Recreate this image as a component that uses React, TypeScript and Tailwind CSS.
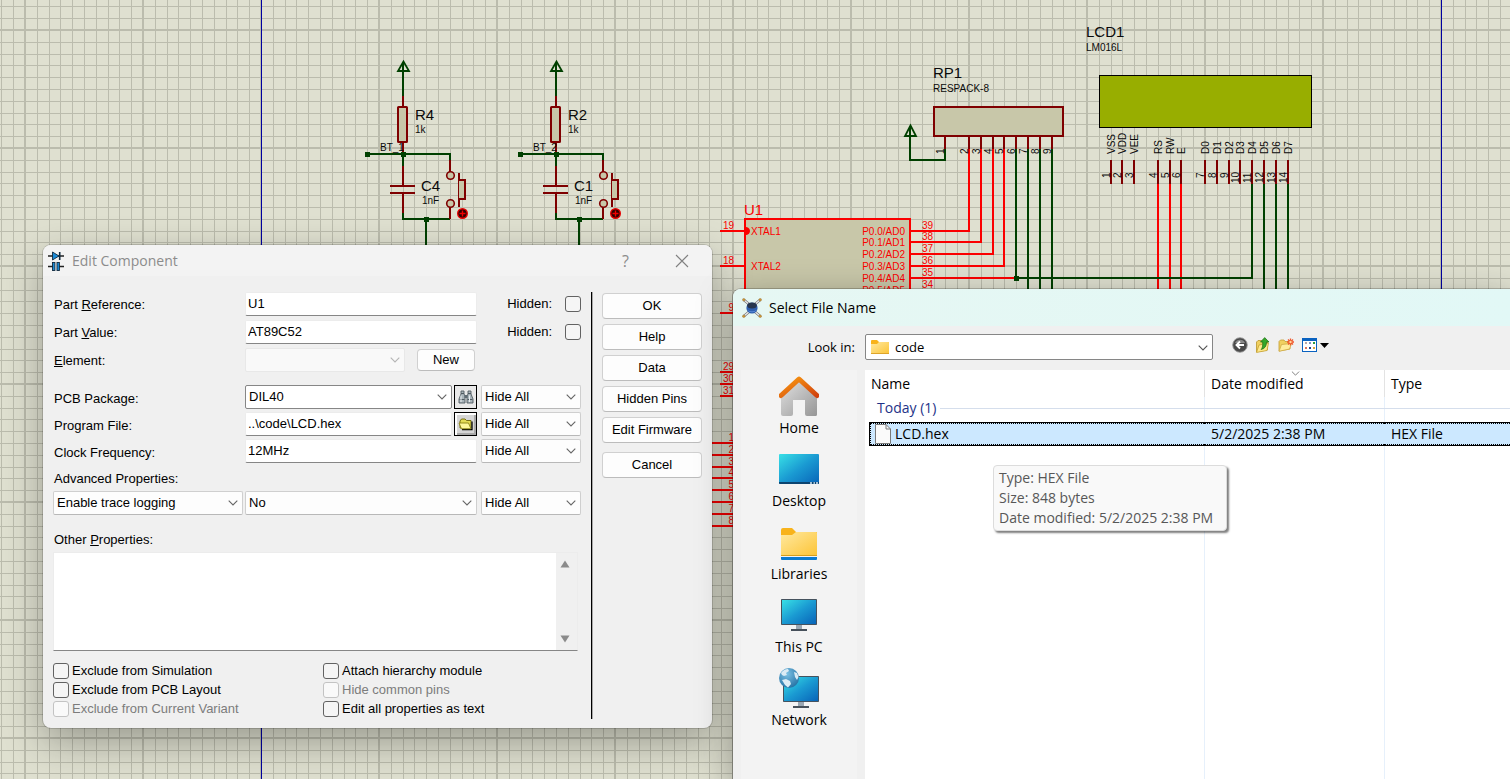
import type { ReactNode } from "react";

const UI = "font-['Open_Sans','Noto_Sans',sans-serif]";

/* ---------- schematic ---------- */

const GREEN = "#004000";
const MAROON = "#7f0000";
const RED = "#fb0000";
const BODY = "#c8c7a9";
const MINOR = [13, 25, 36, 48, 60, 72, 84, 95, 107];

function Lines({ d, color }: { d: string; color: string }) {
  return <path d={d} stroke={color} strokeWidth="2" fill="none" shapeRendering="crispEdges" />;
}

function Label({ x, y, size = 10, color = "#0a0a0a", end, vertical, children }: {
  x: number; y: number; size?: number; color?: string; end?: boolean; vertical?: boolean; children: ReactNode;
}) {
  return (
    <text x={x} y={y} fontSize={size} fill={color} textAnchor={end ? "end" : "start"}
      transform={vertical ? `rotate(-90 ${x} ${y})` : undefined}>
      {children}
    </text>
  );
}

function Node({ x, y }: { x: number; y: number }) {
  return <rect x={x - 2} y={y - 2} width="5" height="5" fill={GREEN} shapeRendering="crispEdges" />;
}

function ButtonCircuit({ dx, r, c, net }: { dx: number; r: string; c: string; net: string }) {
  return (
    <g transform={`translate(${dx} 0)`}>
      <path d="M403.5 61.5 L398 71 H409 Z" stroke={GREEN} strokeWidth="1.8" fill="none" />
      <Lines color={GREEN} d="M403 62V96" />
      <Lines color={MAROON} d="M403 96V107M403 142V152" />
      <rect x="398" y="107" width="9" height="35" rx="0.5" fill={BODY} stroke={MAROON} strokeWidth="2" />
      <Lines color={GREEN} d="M367 154H451M403 154V166M450 154V160M402 219H450M403 213V219M426 219V250" />
      <Lines color={MAROON} d="M403 166V186M390 186H415M390 193H415M403 193V213M450 160V172M450 207V219M459 173V207" />
      <path d="M459 180H465V199H459" stroke={MAROON} strokeWidth="2" fill={BODY} />
      <circle cx="450.5" cy="175.5" r="3.8" fill={BODY} stroke={MAROON} strokeWidth="1.6" />
      <circle cx="450.5" cy="203.5" r="3.8" fill={BODY} stroke={MAROON} strokeWidth="1.6" />
      <circle cx="462.5" cy="213.5" r="4.8" fill="#300000" stroke="#e80000" strokeWidth="1.4" />
      <path d="M459.5 213.5H465.5M462.5 210.5V216.5" stroke="#f00000" strokeWidth="1.4" />
      <Node x={367} y={154} />
      <Node x={403} y={154} />
      <Node x={426} y={219} />
      <Label x={415} y={120} size={15}>{r}</Label>
      <Label x={415} y={133}>1k</Label>
      <Label x={380} y={151}>{net}</Label>
      <Label x={421} y={191} size={15}>{c}</Label>
      <Label x={422} y={204}>1nF</Label>
    </g>
  );
}

const PACK = [945, 969, 981, 993, 1004, 1016, 1028, 1040, 1052];
const PACK_END = [160, 231, 242, 254, 266, 278, 300, 300, 300];
const PORT_Y = [231, 242, 254, 266, 278, 290];
const LCD: [number, string][] = [
  [1111, "VSS"], [1122, "VDD"], [1134, "VEE"], [1158, "RS"], [1170, "RW"], [1181, "E"], [1205, "D0"],
  [1217, "D1"], [1229, "D2"], [1240, "D3"], [1252, "D4"], [1264, "D5"], [1276, "D6"], [1288, "D7"],
];
const LEFT_PINS: [number, number][] = [[19, 231], [18, 266], [9, 313], [29, 372], [30, 384], [31, 396]];
const PORT1 = [443, 455, 467, 478, 490, 502, 514, 526];

function Schematic() {
  return (
    <svg className="absolute inset-0 size-full font-['Liberation_Sans',Arial,sans-serif]" aria-label="Schematic sheet">
      <defs>
        <pattern id="grid" x="24" y="29" width="118" height="118" patternUnits="userSpaceOnUse">
          <rect width="118" height="118" fill="#dfe0d0" />
          <g fill="#bbbcad" shapeRendering="crispEdges">
            <rect width="2" height="118" />
            <rect width="118" height="2" />
            {MINOR.map((m) => <rect key={m} x={m} width="1" height="118" />)}
            {MINOR.map((m) => <rect key={-m} y={m} width="118" height="1" />)}
          </g>
        </pattern>
      </defs>
      <rect width="100%" height="100%" fill="url(#grid)" />
      <rect x="261" width="1" height="100%" fill="#0000a0" />
      <rect x="1441" width="1" height="100%" fill="#0000a0" />

      <ButtonCircuit dx={0} r="R4" c="C4" net="BT_1" />
      <ButtonCircuit dx={153} r="R2" c="C1" net="BT_2" />

      <Label x={933} y={78} size={15}>RP1</Label>
      <Label x={933} y={92}>RESPACK-8</Label>
      <rect x="934" y="107" width="129" height="29" fill={BODY} stroke={MAROON} strokeWidth="2" />
      <path d="M910.5 125.5 L905 136 H916 Z" stroke={GREEN} strokeWidth="1.8" fill="none" />
      <Lines color={GREEN} d="M910 126V160H946" />
      {PACK.map((x, i) => (
        <g key={x}>
          <Lines color={MAROON} d={`M${x} 137V149`} />
          <Lines color={i > 0 && i < 5 ? RED : GREEN} d={`M${x} 149V${PACK_END[i]}`} />
          <Label x={x - 1} y={154} vertical>{i + 1}</Label>
        </g>
      ))}

      <rect x="745" y="219" width="165" height="400" fill={BODY} stroke={RED} strokeWidth="2" />
      <Label x={744} y={215} size={15} color={RED}>U1</Label>
      <path d="M746 227.5 A3.5 3.5 0 0 1 746 234.5 Z" fill={RED} stroke={RED} />
      <Label x={751} y={235} color={RED}>XTAL1</Label>
      <Label x={751} y={270} color={RED}>XTAL2</Label>
      {PORT_Y.map((y, i) => (
        <g key={y}>
          <Lines color={RED} d={`M911 ${y}H${i < 5 ? PACK[i + 1] + 1 : 930}`} />
          <Label x={922} y={y - 2} color={RED}>{39 - i}</Label>
          <Label x={905} y={y + 4} color={RED} end>P0.{i}/AD{i}</Label>
        </g>
      ))}
      {LEFT_PINS.map(([n, y]) => (
        <g key={n}>
          <Lines color={RED} d={`M720 ${y}H745`} />
          <Label x={734} y={y - 2} color={RED} end>{n}</Label>
        </g>
      ))}
      {PORT1.map((y, i) => (
        <g key={y}>
          <Lines color={RED} d={`M700 ${y}H745`} />
          <Label x={734} y={y - 2} color={RED} end>{i + 1}</Label>
        </g>
      ))}

      <Label x={1086} y={37} size={15}>LCD1</Label>
      <Label x={1086} y={51}>LM016L</Label>
      <rect x="1099.5" y="75.5" width="212" height="52" fill="#98ae00" stroke="#000" />
      {LCD.map(([x, name], i) => (
        <g key={name}>
          <Lines color={MAROON} d={`M${x} 160V184`} />
          {i > 2 && i < 6 && <Lines color={RED} d={`M${x} 184V300`} />}
          {i > 9 && <Lines color={GREEN} d={`M${x} 184V${i === 10 ? 279 : 300}`} />}
          <Label x={x + 4} y={154} vertical>{name}</Label>
          <Label x={x - 1} y={i < 9 ? 178 : 183} vertical>{i + 1}</Label>
        </g>
      ))}
      <Lines color={GREEN} d="M1016 278H1252" />
      <Node x={1016} y={278} />
    </svg>
  );
}

/* ---------- form pieces ---------- */

function Chevron({ className }: { className: string }) {
  return (
    <svg viewBox="0 0 10 6" className={className} fill="none" stroke="currentColor" strokeWidth="1.1">
      <path d="M0.7 0.7 L5 5 L9.3 0.7" />
    </svg>
  );
}

function Drop({ value, label, id, width, strong, disabled }: {
  value: string; label?: string; id?: string; width: string; strong?: boolean; disabled?: boolean;
}) {
  return (
    <span className={`relative flex h-6 ${width}`}>
      <select id={id} aria-label={label} disabled={disabled}
        className={`size-full appearance-none rounded-xs border pl-[3px] pr-6 leading-5 ${
          strong ? "border-[#868686] bg-white" : disabled ? "border-[#e8e8e8] bg-[#f9f9f9]" : "border-[#cfcfcf] border-b-[#b8b8b8] bg-[#fdfdfd]"}`}>
        <option>{value}</option>
      </select>
      <Chevron className={`pointer-events-none absolute right-[5px] top-[9px] h-1.5 w-2.5 ${disabled ? "text-[#b5b5b5]" : "text-[#666]"}`} />
    </span>
  );
}

function Field({ id, value, width }: { id: string; value: string; width: string }) {
  return (
    <input id={id} defaultValue={value}
      className={`h-6 rounded-xs border border-[#ececec] border-b-[#868686] bg-white px-0.5 pb-0.5 outline-none ${width}`} />
  );
}

function Check({ id, disabled, children }: { id: string; disabled?: boolean; children: ReactNode }) {
  return (
    <div className="flex h-[19px] items-center gap-[3px]">
      <input type="checkbox" id={id} disabled={disabled}
        className="size-4 shrink-0 appearance-none rounded-[3px] border border-[#626262] bg-[#f5f5f5] disabled:border-[#c3c3c3] disabled:bg-[#f9f9f9]" />
      <label htmlFor={id} className={disabled ? "text-[#7c7c7c]" : ""}>{children}</label>
    </div>
  );
}

function HiddenCheck({ id }: { id: string }) {
  return (
    <div className="ml-auto flex items-center gap-[13px]">
      <label htmlFor={id}>Hidden:</label>
      <input type="checkbox" id={id} className="size-4 appearance-none rounded-[3px] border border-[#626262] bg-[#f5f5f5]" />
    </div>
  );
}

function Push({ children, className = "" }: { children: ReactNode; className?: string }) {
  return (
    <button className={`rounded border border-[#d0d0d0] border-b-[#bcbcbc] bg-[#fdfdfd] ${className}`}>{children}</button>
  );
}

function Binoculars() {
  return (
    <svg viewBox="0 0 16 16" className="size-4">
      <path d="M3 2H6V5L7 7V14H1V10L3 5Z" fill="#a9b4ba" stroke="#4f5a61" strokeWidth="0.9" />
      <path d="M10 2H13V5L15 10V14H9V7L10 5Z" fill="#a9b4ba" stroke="#4f5a61" strokeWidth="0.9" />
      <path d="M6.5 6H9.5V9H6.5Z" fill="#5f6b73" />
      <path d="M3 4.5H6M10 4.5H13M1.5 10.5H6.5M9.5 10.5H14.5" stroke="#4f5a61" />
      <path d="M3 6.5V13M11.5 6.5V13" stroke="#e8edf0" />
    </svg>
  );
}

function OpenFolder() {
  return (
    <svg viewBox="0 0 16 16" className="size-4">
      <path d="M2 12V5L3.5 3H7L8.500 4.500H13V12Z" fill="#e3dc55" stroke="#6b6408" strokeWidth="0.9" />
      <path d="M14 5.500V13.500H4" stroke="#000" strokeWidth="1.3" fill="none" />
      <path d="M1 7H10.500L13 12.800H3.500Z" fill="#fdf89a" stroke="#8a8213" strokeWidth="0.9" />
    </svg>
  );
}

function ComponentIcon() {
  return (
    <svg viewBox="0 0 16 20" className="h-5 w-4">
      <path d="M0 5H16M0 15.5H5M11 15.5H16" stroke="#222" strokeWidth="1.4" />
      <path d="M4.5 1V9L11 5Z" fill="#1a8ad6" stroke="#10293d" strokeWidth="0.9" />
      <path d="M11.7 1V9" stroke="#10293d" strokeWidth="1.6" />
      <rect x="4.5" y="11.5" width="2.4" height="8" fill="#1a8ad6" stroke="#10293d" strokeWidth="0.9" />
      <rect x="9" y="11.5" width="2.4" height="8" fill="#1a8ad6" stroke="#10293d" strokeWidth="0.9" />
    </svg>
  );
}

const labelCell = "w-48 shrink-0 pl-px";

function EditComponent() {
  return (
    <section aria-label="Edit Component"
      className="absolute left-[43px] top-[245px] w-[669px] overflow-hidden rounded-lg bg-[#f0f0f0] font-['Liberation_Sans',Arial,sans-serif] text-[13px] leading-4 text-black shadow-[0_0_0_1px_rgba(0,0,0,0.15),0_14px_40px_rgba(0,0,0,0.32)]">
      <header className={`flex h-[31px] items-center bg-[#f3f3f3] pl-[5px] pr-[23px] text-[#8c8c8c] ${UI}`}>
        <ComponentIcon />
        <h1 className="ml-2 text-[14px]">Edit Component</h1>
        <button aria-label="Help" className="ml-auto mr-[46px] text-[16px]">?</button>
        <button aria-label="Close">
          <svg viewBox="0 0 14 14" className="size-3.5" stroke="#808080" strokeWidth="1.1"><path d="M1 1L13 13M13 1L1 13" /></svg>
        </button>
      </header>

      <div className="flex pl-2.5 pr-2.5">
        <form className="flex w-[528px] flex-col pb-[10px] pt-4">
          <div className="flex h-6 items-center">
            <label htmlFor="ref" className={`${labelCell} pt-px`}>Part <u>R</u>eference:</label>
            <Field id="ref" value="U1" width="w-[232px]" />
            <HiddenCheck id="hide-ref" />
          </div>
          <div className="mt-1 flex h-6 items-center">
            <label htmlFor="val" className={`${labelCell} pt-px`}>Part <u>V</u>alue:</label>
            <Field id="val" value="AT89C52" width="w-[232px]" />
            <HiddenCheck id="hide-val" />
          </div>
          <div className="mt-1 flex h-6 items-center">
            <label htmlFor="element" className={`${labelCell} pt-px`}><u>E</u>lement:</label>
            <Drop id="element" value="" width="w-40" disabled />
            <Push className="ml-3 h-[22px] w-[58px]">New</Push>
          </div>

          <div className="mt-[13px] flex h-6 items-center">
            <label htmlFor="pcb" className={`${labelCell} pt-1`}>PCB Package:</label>
            <Drop id="pcb" value="DIL40" width="w-[207px]" strong />
            <button type="button" aria-label="Find package" className="ml-0.5 mr-1 flex h-6 w-[23px] items-center justify-center border border-black bg-[#e9e9e9]"><Binoculars /></button>
            <Drop label="PCB Package visibility" value="Hide All" width="w-[100px]" />
          </div>
          <div className="mt-[3px] flex h-6 items-center">
            <label htmlFor="prog" className={`${labelCell} pt-1`}>Program File:</label>
            <Field id="prog" value="..\code\LCD.hex" width="w-[207px]" />
            <button type="button" aria-label="Browse" className="ml-0.5 mr-1 flex h-6 w-[23px] items-center justify-center border border-black bg-[#d6d6d6] shadow-[inset_2px_2px_0_#fff,inset_-2px_-2px_0_#a9a9a9]"><OpenFolder /></button>
            <Drop label="Program File visibility" value="Hide All" width="w-[100px]" />
          </div>
          <div className="mt-[3px] flex h-6 items-center">
            <label htmlFor="clock" className={`${labelCell} pt-1`}>Clock Frequency:</label>
            <Field id="clock" value="12MHz" width="w-[232px]" />
            <span className="w-1" />
            <Drop label="Clock Frequency visibility" value="Hide All" width="w-[100px]" />
          </div>

          <label htmlFor="adv" className="h-7 pl-px pt-2">Advanced Properties:</label>
          <div className="flex h-6">
            <Drop id="adv" value="Enable trace logging" width="w-[190px]" />
            <span className="w-0.5" />
            <Drop label="Advanced value" value="No" width="w-[232px]" />
            <span className="w-1" />
            <Drop label="Advanced visibility" value="Hide All" width="w-[100px]" />
          </div>

          <label htmlFor="other" className="mt-[17px] h-5 pl-px">Other <u>P</u>roperties:</label>
          <div className="flex h-[99px] w-[525px] border border-[#ececec] border-b-[#868686] bg-white">
            <textarea id="other" className="flex-1 resize-none outline-none" />
            <div className="flex w-[21px] flex-col items-center justify-between bg-[#f0f0f0] py-[7px] pr-1">
              <svg viewBox="0 0 10 8" className="h-2 w-2.5"><path d="M5 0.5L9.5 7.5H0.5Z" fill="#8b8b8b" /></svg>
              <svg viewBox="0 0 10 8" className="h-2 w-2.5"><path d="M5 7.5L9.5 0.5H0.5Z" fill="#8b8b8b" /></svg>
            </div>
          </div>

          <div className="mt-2.5 grid grid-cols-[270px_1fr]">
            <Check id="ex-sim">Exclude from Simulation</Check>
            <Check id="attach">Attach hierarchy module</Check>
            <Check id="ex-pcb">Exclude from PCB Layout</Check>
            <Check id="common" disabled>Hide common pins</Check>
            <Check id="ex-var" disabled>Exclude from Current Variant</Check>
            <Check id="as-text">Edit all properties as text</Check>
          </div>
        </form>

        <div className="mb-[9px] ml-2.5 mt-4 w-0.5 border-l border-black bg-[#a8a8a8]" />

        <div className="ml-[9px] flex flex-1 flex-col gap-[5px] pt-[17px]">
          <Push className="h-[26px]">OK</Push>
          <Push className="h-[26px]">Help</Push>
          <Push className="h-[26px]">Data</Push>
          <Push className="h-[26px]">Hidden Pins</Push>
          <Push className="h-[26px]">Edit Firmware</Push>
          <Push className="mt-1 h-[26px]">Cancel</Push>
        </div>
      </div>
    </section>
  );
}

/* ---------- file picker ---------- */

function AppIcon() {
  return (
    <svg viewBox="0 0 20 20" className="size-5">
      <path d="M2 2L8 7M18 2L12 7M2 18L8 13M18 18L12 13" stroke="#777" strokeWidth="2.6" />
      <path d="M2 2L8 7M18 2L12 7M2 18L8 13M18 18L12 13" stroke="#eee" strokeWidth="1.1" />
      <g fill="#d49a35" stroke="#80602a" strokeWidth="0.4">
        <circle cx="1.8" cy="1.8" r="1.3" /><circle cx="18.2" cy="1.8" r="1.3" />
        <circle cx="1.8" cy="18.2" r="1.3" /><circle cx="18.2" cy="18.2" r="1.3" />
      </g>
      <circle cx="10" cy="10" r="5.6" fill="#2f5fae" />
      <ellipse cx="10" cy="7.5" rx="4.8" ry="3" fill="#27354d" />
      <path d="M5.5 12 A5 4 0 0 0 14.5 12 Q10 15 5.5 12Z" fill="#6b9ae8" />
    </svg>
  );
}

function Screen({ x, y, w, h }: { x: number; y: number; w: number; h: number }) {
  const mid = x + w / 2;
  return (
    <g>
      <rect x={mid - 3} y={y + h} width="6" height="4" fill="#9aa7b3" />
      <rect x={mid - 8} y={y + h + 4} width="16" height="2" fill="#46505a" />
      <rect x={x} y={y} width={w} height={h} rx="0.8" fill="#45525e" />
      <rect x={x + 1} y={y + 1} width={w - 2} height={h - 2} fill="url(#screen)" />
    </g>
  );
}

const PLACES: { name: string; art: ReactNode }[] = [
  {
    name: "Home",
    art: (
      <>
        <path d="M2 20L20 4L38 20V38.500Q38 40 36.500 40H28Q26 40 26 38V24H14V38Q14 40 12 40H4Q2 40 2 38Z" fill="url(#wall)" />
        <path d="M2 19.500L20 3L38 19.500" stroke="url(#roof)" strokeWidth="5" fill="none" strokeLinejoin="round" strokeLinecap="round" />
      </>
    ),
  },
  {
    name: "Desktop",
    art: (
      <>
        <rect y="5" width="40" height="30" rx="1" fill="url(#screen)" />
        <path d="M0 33H40V34Q40 35 39 35H1Q0 35 0 34Z" fill="#0c4470" />
        <path d="M31 34H33M34.500 34H36M37 34H39" stroke="#d5e8f5" strokeWidth="1.3" />
      </>
    ),
  },
  {
    name: "Libraries",
    art: (
      <>
        <path d="M2 8Q2 6 4 6H13L17 10H38V20H2Z" fill="#f8b31b" />
        <path d="M2 13H13L17 10H37Q38 10 38 11V34H2Z" fill="url(#folder)" />
        <rect x="2" y="33" width="36" height="1" fill="#d59e1c" />
        <path d="M2 35H38V37Q38 38 37 38H3Q2 38 2 37Z" fill="#0b7bd0" />
      </>
    ),
  },
  { name: "This PC", art: <Screen x={2} y={4} w={36} h={26} /> },
  {
    name: "Network",
    art: (
      <>
        <Screen x={4} y={8} w={36} h={26} />
        <circle cx="10" cy="10" r="10" fill="url(#globe)" />
        <path d="M2 5Q5 1 9 1L10 3L7 5L8 7L5 8L3 7ZM15 4L18 5L19.500 9L18 12L16 9ZM3 12L7 11L11 13L12 16L9 19.500L6 17Z" fill="#dcecf5" />
      </>
    ),
  },
];

function ArtDefs() {
  return (
    <svg className="absolute size-0" aria-hidden="true">
      <defs>
        <linearGradient id="screen" x1="0" y1="0" x2="1" y2="1"><stop offset="0" stopColor="#38e0e6" /><stop offset="0.5" stopColor="#1a9ad2" /><stop offset="1" stopColor="#0864b8" /></linearGradient>
        <linearGradient id="wall" x1="0" y1="0" x2="1" y2="1"><stop offset="0" stopColor="#e2e2e2" /><stop offset="1" stopColor="#969696" /></linearGradient>
        <linearGradient id="roof" x1="0" y1="0" x2="1" y2="1"><stop offset="0" stopColor="#f99b12" /><stop offset="1" stopColor="#d2420d" /></linearGradient>
        <linearGradient id="folder" x1="0" y1="0" x2="1" y2="1"><stop offset="0" stopColor="#ffe9a0" /><stop offset="1" stopColor="#fcc436" /></linearGradient>
        <radialGradient id="globe" cx="0.4" cy="0.3" r="0.8"><stop offset="0" stopColor="#7cc1e4" /><stop offset="1" stopColor="#1d6a9e" /></radialGradient>
      </defs>
    </svg>
  );
}

function FolderGlyph() {
  return (
    <svg viewBox="0 0 18 14" className="h-3.5 w-[18px]">
      <path d="M0 1Q0 0 1 0H6L8 2H17Q18 2 18 3V8H0Z" fill="#f8b31b" />
      <path d="M0 4H6L8 2H17Q18 2 18 3V13Q18 14 17 14H1Q0 14 0 13Z" fill="url(#folder)" />
      <rect y="13" width="18" height="1" fill="#dea52a" />
    </svg>
  );
}

function ToolIcons() {
  return (
    <div className="ml-[19px] flex items-center pb-1">
      <button aria-label="Back">
        <svg viewBox="0 0 16 16" className="size-4">
          <circle cx="8" cy="8" r="7.3" fill="#4a4a4a" stroke="#9b9b9b" strokeWidth="0.9" />
          <path d="M3 6A5.5 5.5 0 0 1 13 6Z" fill="#8a8a8a" />
          <path d="M12 8H5M8 4.5L4.5 8L8 11.5" stroke="#fff" strokeWidth="1.9" fill="none" />
        </svg>
      </button>
      <button aria-label="Up one level" className="ml-[7px]">
        <svg viewBox="0 0 16 16" className="size-4">
          <path d="M1.5 15V5L3 3.5H6.500L7.500 5H12.500V13Z" fill="#f0d060" stroke="#b8942c" strokeWidth="0.8" />
          <path d="M1.5 15.400L4 8L13.500 6L12 13.500Z" fill="#ffe98c" stroke="#c7a234" strokeWidth="0.8" />
          <path d="M6 12.500Q8 11 7.700 5H5.500L9.700 0.600L14 5H11.500Q11.500 11.500 6 12.500Z" fill="#35a829" stroke="#1c6e14" strokeWidth="0.7" />
        </svg>
      </button>
      <button aria-label="New folder" className="ml-[7px]">
        <svg viewBox="0 0 16 16" className="size-4">
          <path d="M1 14V4.500L2.500 3H6L7 4.500H12V12Z" fill="#f0d060" stroke="#c39d34" strokeWidth="0.8" />
          <path d="M1 14.300L3.500 7.500L13.500 6.500L11.500 12Z" fill="#ffec9c" stroke="#cfab45" strokeWidth="0.8" />
          <path d="M12.500 1.500V8.500M9 5H16M10 2.500L15 7.500M15 2.500L10 7.500" stroke="#f0562a" strokeWidth="1.3" />
          <circle cx="12.500" cy="5" r="1.200" fill="#ffd9a0" />
        </svg>
      </button>
      <button aria-label="View menu" className="ml-2 flex items-center gap-[3px]">
        <svg viewBox="0 0 15 14" className="h-3.5 w-[15px]" shapeRendering="crispEdges">
          <rect width="15" height="14" fill="#0a62c0" />
          <rect x="1" y="3" width="13" height="10" fill="#fff" />
          <path d="M3 5H5" stroke="#b9a7a7" strokeWidth="2" />
          <path d="M7 5H9" stroke="#7d93c4" strokeWidth="2" />
          <path d="M11 5H13" stroke="#2c9a3a" strokeWidth="2" />
          <path d="M3 10H5" stroke="#e0735a" strokeWidth="2" />
          <path d="M7 10H9" stroke="#1e3f8f" strokeWidth="2" />
          <path d="M11 10H13" stroke="#d9a53f" strokeWidth="2" />
        </svg>
        <svg viewBox="0 0 9 5" className="h-[5px] w-[9px]"><path d="M0 0H9L4.5 5Z" fill="#000" /></svg>
      </button>
    </div>
  );
}

function SelectFile() {
  return (
    <section aria-label="Select File Name"
      className={`absolute bottom-0 left-[733px] right-0 top-[289px] flex flex-col rounded-tl-lg bg-[#f0f0f0] text-[14px] leading-5 text-black shadow-[0_0_0_1px_rgba(0,0,0,0.2),0_10px_36px_rgba(0,0,0,0.36)] ${UI}`}>
      <header className="flex h-[37px] shrink-0 items-center gap-[7px] rounded-tl-lg bg-linear-to-r from-[#e6f7f3] to-[#e2f8f6] pl-[9px]">
        <AppIcon />
        <h1>Select File Name</h1>
      </header>

      <div className="flex h-11 shrink-0 items-center pb-0.5">
        <label htmlFor="look" className="w-[122px] text-right text-[13px]">Look in:</label>
        <div className="relative ml-2.5 flex h-[26px] w-[348px]">
          <select id="look" className="size-full appearance-none rounded-xs border border-[#868686] bg-white pl-[29px] text-[13px]">
            <option>code</option>
          </select>
          <span className="pointer-events-none absolute left-1.5 top-1.5"><FolderGlyph /></span>
          <Chevron className="pointer-events-none absolute right-[5px] top-[11px] h-1.5 w-2.5 text-[#555]" />
        </div>
        <ToolIcons />
      </div>

      <div className="flex min-h-0 flex-1">
        <nav className="ml-2 flex w-[116px] shrink-0 flex-col gap-[9px] bg-[#f3f3f3] pt-1.5">
          {PLACES.map((p) => (
            <a key={p.name} href="#" className="flex h-16 flex-col items-center gap-0.5">
              <svg viewBox="0 0 40 40" className="size-10 shrink-0">{p.art}</svg>
              <span>{p.name}</span>
            </a>
          ))}
        </nav>

        <div className="relative ml-2 min-w-0 flex-1 bg-white bg-[linear-gradient(90deg,transparent_339px,#e6f0fb_339px,#e6f0fb_340px,transparent_340px,transparent_519px,#e6f0fb_519px,#e6f0fb_520px,transparent_520px)] pl-[5px]">
          <table className="w-full table-fixed border-separate border-spacing-0 text-left">
            <colgroup>
              <col className="w-[334px]" />
              <col className="w-[180px]" />
              <col />
            </colgroup>
            <thead>
              <tr className="h-[27px]">
                <th className="p-0 pl-px font-normal">Name</th>
                <th className="relative border-l border-[#e3e3e3] p-0 pl-1.5 font-normal">
                  Date modified
                  <Chevron className="absolute left-[86px] top-px h-[5px] w-[9px] text-[#777]" />
                </th>
                <th className="border-l border-[#e3e3e3] p-0 pl-1.5 font-normal">Type</th>
              </tr>
            </thead>
            <tbody>
              <tr className="h-[26px]">
                <td colSpan={3} className="p-0">
                  <div className="flex items-center gap-1 pb-1 pl-[7px] text-[#1e3287]">
                    Today (1)
                    <span className="h-px flex-1 bg-[#d5deec]" />
                  </div>
                </td>
              </tr>
              <tr className="h-[22px] bg-[#cce8ff] outline outline-black">
                <td className="border-y border-l border-dotted border-black p-0 pl-1">
                  <div className="flex h-5 items-center gap-1">
                    <svg viewBox="0 0 16 20" className="h-5 w-4 shrink-0">
                      <path d="M0.5 0.5H11L15.5 5V19.5H0.5Z" fill="#fafafa" stroke="#7a7a7a" />
                      <path d="M11 0.5V5H15.5" fill="none" stroke="#7a7a7a" />
                    </svg>
                    LCD.hex
                  </div>
                </td>
                <td className="border-y border-dotted border-black p-0 pl-[7px]">5/2/2025 2:38 PM</td>
                <td className="border-y border-dotted border-black p-0 pl-[7px]">HEX File</td>
              </tr>
            </tbody>
          </table>

          <div role="tooltip"
            className="absolute left-32 top-[95px] w-[234px] rounded border border-[#dcdcdc] bg-[#f9f9f9] px-[5px] py-0.5 text-[#575757] shadow-[2px_2px_2px_rgba(0,0,0,0.5)]">
            <p>Type: HEX File</p>
            <p>Size: 848 bytes</p>
            <p>Date modified: 5/2/2025 2:38 PM</p>
          </div>
        </div>
      </div>
    </section>
  );
}

export default function App() {
  return (
    <main className="relative h-screen overflow-hidden bg-[#dfe0d0]">
      <ArtDefs />
      <Schematic />
      <EditComponent />
      <SelectFile />
    </main>
  );
}
